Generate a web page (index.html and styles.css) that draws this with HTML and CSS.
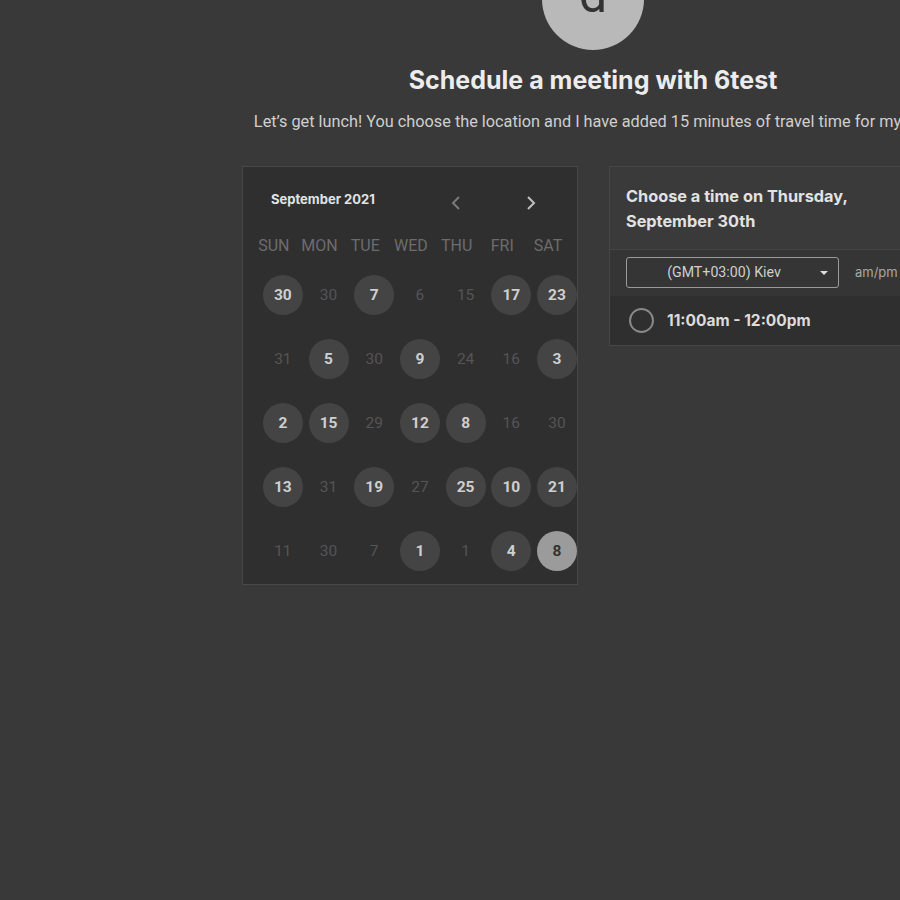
FILE: index.html
```html
<!DOCTYPE html>
<html>
<head>
<meta charset="utf-8">
<link rel="stylesheet" href="styles.css">
</head>
<body>
<div class="page">
  <div class="avatar"><span>d</span></div>
  <h1 class="title">Schedule a meeting with 6test</h1>
  <p class="subtitle">Let’s get lunch! You choose the location and I have added 15 minutes of travel time for myself.</p>
  <div class="panels">
    <div class="calendar">
      <div class="cal-head">
        <div class="month">September 2021</div>
        <button class="nav nav-prev"><svg width="10" height="16" viewBox="0 0 10 16"><path d="M8 2 L2 8 L8 14" fill="none" stroke="currentColor" stroke-width="2"/></svg></button>
        <button class="nav nav-next"><svg width="10" height="16" viewBox="0 0 10 16"><path d="M2 2 L8 8 L2 14" fill="none" stroke="currentColor" stroke-width="2"/></svg></button>
      </div>
      <div class="grid">
        <div class="wd">SUN</div><div class="wd">MON</div><div class="wd">TUE</div><div class="wd">WED</div><div class="wd">THU</div><div class="wd">FRI</div><div class="wd">SAT</div>

        <div class="day"><span class="av">30</span></div><div class="day"><span class="dim">30</span></div><div class="day"><span class="av">7</span></div><div class="day"><span class="dim">6</span></div><div class="day"><span class="dim">15</span></div><div class="day"><span class="av">17</span></div><div class="day"><span class="av">23</span></div>

        <div class="day"><span class="dim">31</span></div><div class="day"><span class="av">5</span></div><div class="day"><span class="dim">30</span></div><div class="day"><span class="av">9</span></div><div class="day"><span class="dim">24</span></div><div class="day"><span class="dim">16</span></div><div class="day"><span class="av">3</span></div>

        <div class="day"><span class="av">2</span></div><div class="day"><span class="av">15</span></div><div class="day"><span class="dim">29</span></div><div class="day"><span class="av">12</span></div><div class="day"><span class="av">8</span></div><div class="day"><span class="dim">16</span></div><div class="day"><span class="dim">30</span></div>

        <div class="day"><span class="av">13</span></div><div class="day"><span class="dim">31</span></div><div class="day"><span class="av">19</span></div><div class="day"><span class="dim">27</span></div><div class="day"><span class="av">25</span></div><div class="day"><span class="av">10</span></div><div class="day"><span class="av">21</span></div>

        <div class="day"><span class="dim">11</span></div><div class="day"><span class="dim">30</span></div><div class="day"><span class="dim">7</span></div><div class="day"><span class="av">1</span></div><div class="day"><span class="dim">1</span></div><div class="day"><span class="av">4</span></div><div class="day"><span class="av sel">8</span></div>
      </div>
    </div>
    <div class="times">
      <div class="times-head">Choose a time on Thursday, September 30th</div>
      <div class="tz-row">
        <div class="select"><span>(GMT+03:00) Kiev</span><i class="caret"></i></div>
        <div class="ampm">am/pm</div>
      </div>
      <div class="slot">
        <span class="radio"></span>
        <span class="slot-text">11:00am - 12:00pm</span>
      </div>
    </div>
  </div>
</div>
</body>
</html>
```
FILE: styles.css
```css
html, body {
  margin: 0;
  padding: 0;
  background: #393939;
  overflow: hidden;
  height: 100%;
}
.page {
  width: 1186px;
  display: flex;
  flex-direction: column;
  align-items: center;
}
.avatar {
  width: 102px;
  height: 102px;
  border-radius: 50%;
  background: #b9b9b9;
  margin-top: -52px;
  display: flex;
  justify-content: center;
  align-items: flex-start;
  overflow: hidden;
}
.avatar span {
  font-family: Roboto, sans-serif;
  font-size: 50px;
  line-height: 50px;
  color: #333;
  margin-top: 22px;
}
.title {
  margin: 16px 0 0;
  font-family: Inter, sans-serif;
  font-weight: 700;
  font-size: 25px;
  line-height: 29px;
  color: #ececec;
}
.subtitle {
  margin: 17px 0 0;
  font-family: Roboto, sans-serif;
  font-size: 16.3px;
  line-height: 20px;
  color: #cfcfcf;
  white-space: nowrap;
}
.panels {
  margin-top: 34px;
  display: flex;
  align-items: flex-start;
  gap: 31px;
}
.calendar {
  width: 317px;
  height: 417px;
  border: 1px solid #484848;
  background: #2f2f2f;
  overflow: hidden;
  padding-left: 17px;
}
.cal-head {
  height: 64px;
  display: flex;
  align-items: center;
  padding-left: 11px;
}
.month {
  font-family: Inter, sans-serif;
  font-weight: 700;
  font-size: 13px;
  color: #e2e2e2;
  width: 170px;
}
.nav {
  width: 30px;
  height: 30px;
  border: 0;
  background: transparent;
  padding: 0;
  display: flex;
  align-items: center;
  justify-content: center;
  margin-top: 8px;
}
.nav-prev { color: #7a7a7a; }
.nav-next { color: #c0c0c0; margin-left: 45px; }
.grid {
  display: grid;
  grid-template-columns: repeat(7, 45.7px);
  grid-template-rows: 32px;
  grid-auto-rows: 64px;
  width: 320px;
}
.wd {
  font-family: Roboto, sans-serif;
  font-size: 16px;
  color: #6c6c6c;
  display: flex;
  align-items: center;
  justify-content: center;
  padding-bottom: 4px;
  transform: translateX(-9px);
  white-space: nowrap;
}
.day {
  display: flex;
  align-items: center;
  justify-content: center;
}
.day span {
  width: 40px;
  height: 40px;
  border-radius: 50%;
  display: flex;
  align-items: center;
  justify-content: center;
  font-family: Roboto, sans-serif;
  font-size: 15.5px;
}
.dim {
  color: #555;
}
.av {
  background: #444;
  color: #cfcfcf;
  font-weight: 700;
}
.av.sel {
  background: #9b9b9b;
  color: #333;
}
.times {
  width: 333px;
  border: 1px solid #464646;
  background: #3a3a3a;
}
.times-head {
  width: 270px;
  padding: 17px 16px 15px;
  font-family: Inter, sans-serif;
  font-weight: 700;
  font-size: 16.3px;
  line-height: 25px;
  color: #e2e2e2;
  border-bottom: 1px solid #444;
}
.tz-row {
  height: 46px;
  background: #353535;
  display: flex;
  align-items: center;
  padding-left: 16px;
  gap: 16px;
}
.select {
  width: 211px;
  height: 29px;
  border: 1px solid #9a9a9a;
  border-radius: 3px;
  display: flex;
  align-items: center;
  justify-content: center;
  position: relative;
  font-family: Roboto, sans-serif;
  font-size: 14.2px;
  color: #cfcfcf;
  margin-top: -2px;
}
.select span { margin-right: 17px; }
.caret {
  position: absolute;
  right: 10px;
  top: 13px;
  width: 0;
  height: 0;
  border-left: 4px solid transparent;
  border-right: 4px solid transparent;
  border-top: 4px solid #ddd;
}
.ampm {
  font-family: Inter, sans-serif;
  font-size: 13px;
  color: #a8a8a8;
  margin-top: -2px;
}
.slot {
  height: 49px;
  background: #2f2f2f;
  display: flex;
  align-items: center;
  padding-left: 19px;
  gap: 13px;
}
.radio {
  width: 21px;
  height: 21px;
  border: 2px solid #888;
  border-radius: 50%;
  margin-top: -1px;
}
.slot-text {
  font-family: Inter, sans-serif;
  font-weight: 700;
  font-size: 15.5px;
  color: #dcdcdc;
  margin-top: -1px;
}
```
